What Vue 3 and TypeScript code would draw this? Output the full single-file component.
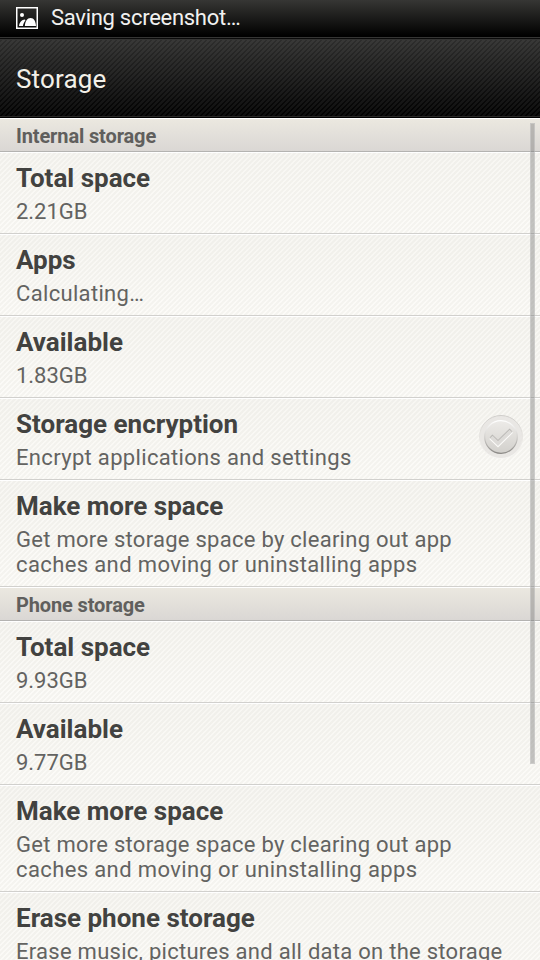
<script setup lang="ts">
interface Item {
  title: string
  lines: string[]
  checkable?: boolean
}
interface Section {
  name: string
  items: Item[]
}

const moreSpace = [
  'Get more storage space by clearing out app',
  'caches and moving or uninstalling apps',
]

const sections: Section[] = [
  {
    name: 'Internal storage',
    items: [
      { title: 'Total space', lines: ['2.21GB'] },
      { title: 'Apps', lines: ['Calculating…'] },
      { title: 'Available', lines: ['1.83GB'] },
      { title: 'Storage encryption', lines: ['Encrypt applications and settings'], checkable: true },
      { title: 'Make more space', lines: moreSpace },
    ],
  },
  {
    name: 'Phone storage',
    items: [
      { title: 'Total space', lines: ['9.93GB'] },
      { title: 'Available', lines: ['9.77GB'] },
      { title: 'Make more space', lines: moreSpace },
      { title: 'Erase phone storage', lines: ['Erase music, pictures and all data on the storage'] },
    ],
  },
]

// Sizes are set tight; short lines of text get wider tracking.
function tracking(line: string): string {
  if (/^\d/.test(line)) return 'tight'
  if (line.startsWith('caches')) return 'wider'
  return line.length < 40 ? 'wide' : 'normal'
}
</script>

<template>
  <div class="screen">
    <div class="status">
      <svg class="picture" width="22" height="22" viewBox="0 0 22 22">
        <rect x="0.75" y="0.75" width="20.5" height="20.5" fill="none" stroke="#fff" stroke-width="1.5" />
        <circle cx="6" cy="8" r="2" fill="#fff" />
        <path d="M3 19C3.4 15.6 5.6 12.8 9 12.6L9.4 13.4C8 15 7.2 17 7 19Z" fill="#fff" />
        <path d="M8.8 19C9.2 14.2 11.2 11 14.6 11C18 11 19.6 14 20 19Z" fill="#fff" />
      </svg>
      <span class="status-text">Saving screenshot…</span>
    </div>
    <header class="bar"><h1>Storage</h1></header>
    <main class="list">
      <section v-for="section in sections" :key="section.name">
        <h2>{{ section.name }}</h2>
        <div v-for="item in section.items" :key="item.title" class="row">
          <div class="texts">
            <h3>{{ item.title }}</h3>
            <p v-for="line in item.lines" :key="line" :class="tracking(line)">{{ line }}</p>
          </div>
          <svg v-if="item.checkable" class="check" width="46" height="46" viewBox="-1 -1 46 46">
            <defs>
              <linearGradient id="ring" x1="0" y1="0" x2="0" y2="1">
                <stop offset="0" stop-color="#cfcdca" />
                <stop offset="0.5" stop-color="#e8e6e2" />
                <stop offset="1" stop-color="#f8f7f5" />
              </linearGradient>
              <linearGradient id="knob" x1="0" y1="0" x2="0" y2="1">
                <stop offset="0" stop-color="#edebe8" />
                <stop offset="1" stop-color="#d2d0cc" />
              </linearGradient>
              <linearGradient id="rim" x1="0" y1="0" x2="0" y2="1">
                <stop offset="0" stop-color="#fff" />
                <stop offset="0.5" stop-color="#d3d1ce" />
                <stop offset="1" stop-color="#8b8986" />
              </linearGradient>
            </defs>
            <circle cx="22" cy="22" r="21.5" fill="#e9e7e4" stroke="url(#ring)" />
            <circle cx="22" cy="22" r="16.3" fill="url(#knob)" stroke="url(#rim)" stroke-width="1.2" />
            <path d="M11.8 22.4L19 29.4L32.4 16.2" fill="none" stroke="#fbfaf8" stroke-width="4.4" />
            <path d="M12 21L19 27.8L32 15" fill="none" stroke="#b9b7b4" stroke-width="4" />
            <path d="M12.4 21.9L19 28.4L31.8 15.9" fill="none" stroke="#dddbd8" stroke-width="3.4" />
          </svg>
        </div>
      </section>
    </main>
    <div class="scrollbar"></div>
  </div>
</template>

<style>
html,
body {
  margin: 0;
  overflow: hidden;
}
</style>

<style scoped>
.screen {
  position: relative;
  width: 540px;
  height: 960px;
  overflow: hidden;
  background: #f8f7f4;
  font-family: Roboto, 'Liberation Sans', sans-serif;
}
h1,
h2,
h3,
p {
  margin: 0;
  white-space: nowrap;
}
.status {
  display: flex;
  align-items: center;
  box-sizing: border-box;
  height: 38px;
  padding: 0 16px 2px;
  gap: 13px;
  background: linear-gradient(#363634, #000 36px);
  border-bottom: 1px solid #353534;
}
.status-text {
  color: #f1f1f0;
  font-size: 22px;
  line-height: 36px;
  letter-spacing: -0.28px;
}
.bar {
  box-sizing: border-box;
  height: 80px;
  padding-left: 16px;
  border-top: 1px solid #0b0b0b;
  border-bottom: 1px solid #000;
  background:
    linear-gradient(135deg, rgba(255, 255, 255, 0.05) 12.5%, transparent 12.5% 37.5%, rgba(255, 255, 255, 0.05) 37.5% 62.5%, transparent 62.5% 87.5%, rgba(255, 255, 255, 0.05) 87.5%) 0 0 / 5px 5px,
    linear-gradient(#2e2e2d, #000);
  box-shadow: inset 0 1px #343433, inset 0 -1px #292827;
}
h1 {
  color: #f3f0e8;
  font-size: 26px;
  font-weight: 400;
  line-height: 80px;
  letter-spacing: 0.15px;
}
h2 {
  box-sizing: border-box;
  height: 34px;
  padding-left: 16px;
  border-top: 1px solid #fff;
  border-bottom: 1px solid #b4b3b1;
  background: linear-gradient(#ebe8e0, #dad7d4);
  color: #605f5d;
  font-size: 20px;
  font-weight: 700;
  line-height: 35px;
  letter-spacing: -0.13px;
}
.row {
  display: flex;
  justify-content: space-between;
  box-sizing: border-box;
  padding: 10px 17px 9px 16px;
  border-top: 1px solid #fff;
  border-bottom: 1px solid #d1d0cd;
  background:
    linear-gradient(135deg, rgba(90, 90, 60, 0.04) 12.5%, transparent 12.5% 37.5%, rgba(90, 90, 60, 0.04) 37.5% 62.5%, transparent 62.5% 87.5%, rgba(90, 90, 60, 0.04) 87.5%) 0 0 / 5px 5px,
    linear-gradient(#f7f6f2, #fcfbf8);
}
h3 {
  height: 36px;
  color: #424240;
  font-size: 26px;
  font-weight: 700;
  line-height: 30px;
}
p {
  height: 25px;
  color: #636361;
  font-size: 22px;
  line-height: 25px;
}
.normal {
  letter-spacing: 0.27px;
}
.wide {
  letter-spacing: 0.33px;
}
.wider {
  letter-spacing: 0.38px;
}
.tight {
  letter-spacing: -0.05px;
}
.check {
  margin: 5px -1px 0 0;
}
.scrollbar {
  position: absolute;
  top: 123px;
  right: 5px;
  width: 5px;
  height: 641px;
  background: rgba(120, 120, 120, 0.42);
  box-sizing: border-box;
  border: 1px solid rgba(225, 225, 225, 0.35);
}
</style>
